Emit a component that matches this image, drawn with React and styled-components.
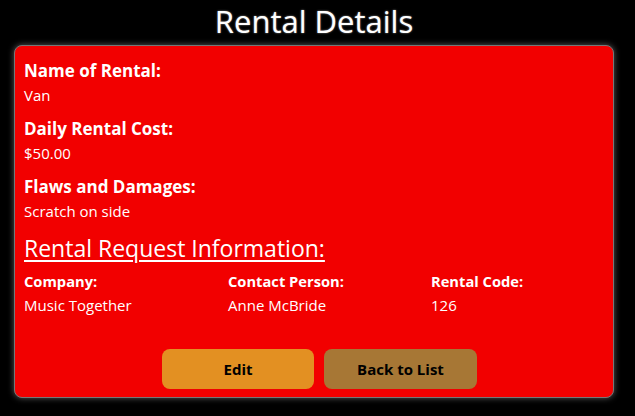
import React from "react";
import styled, { createGlobalStyle } from "styled-components";

const Global = createGlobalStyle`
  html, body { margin: 0; padding: 0; background: #000; }
  body { font-family: "Open Sans", "Noto Sans", sans-serif; color: #fff; }
`;

const Page = styled.div`
  width: 628px;
  height: 416px;
  background: #000;
  display: flex;
  flex-direction: column;
  align-items: center;
  box-sizing: border-box;
`;

const Title = styled.h1`
  margin: 0;
  font-size: 31px;
  font-weight: 500;
  line-height: 42px;
  color: #fff;
  text-shadow: 0 0 2px rgba(255,255,255,0.6);
`;

const Card = styled.div`
  margin-top: 3px;
  width: 600px;
  box-sizing: border-box;
  background: #f20000;
  border: 1px solid #777;
  border-radius: 8px;
  box-shadow: 0 0 6px rgba(200,200,200,0.45);
  padding: 13px 10px 8px 9px;
  display: flex;
  flex-direction: column;
`;

const Field = styled.div`
  display: flex;
  flex-direction: column;
  margin-bottom: 10px;
`;

const Label = styled.div`
  font-size: 17px;
  font-weight: 700;
  line-height: 24px;
`;

const Value = styled.div`
  font-size: 15px;
  line-height: 24px;
`;

const SectionHeading = styled.h2`
  margin: 0 0 7px 0;
  font-size: 23px;
  font-weight: 500;
  text-decoration: underline;
  text-decoration-thickness: 2px;
  text-underline-offset: 3px;
  line-height: 30px;
`;

const Grid = styled.div`
  display: grid;
  grid-template-columns: 204px 203px 1fr;
`;

const SmallLabel = styled.div`
  font-size: 14.7px;
  font-weight: 700;
  line-height: 22px;
`;

const SmallValue = styled.div`
  font-size: 15px;
  line-height: 26px;
`;

const Actions = styled.div`
  display: flex;
  justify-content: center;
  gap: 10px;
  margin-top: 31px;
  padding-left: 12px;
`;

const Button = styled.button`
  width: ${(p) => p.$w}px;
  height: 40px;
  border: none;
  border-radius: 8px;
  background: ${(p) => p.$bg};
  color: #000;
  font-family: "Open Sans", "Noto Sans", sans-serif;
  font-weight: 700;
  font-size: 15px;
  cursor: pointer;
`;

export default function App() {
  return (
    <Page>
      <Global />
      <Title>Rental Details</Title>
      <Card>
        <Field>
          <Label>Name of Rental:</Label>
          <Value>Van</Value>
        </Field>
        <Field>
          <Label>Daily Rental Cost:</Label>
          <Value>$50.00</Value>
        </Field>
        <Field>
          <Label>Flaws and Damages:</Label>
          <Value>Scratch on side</Value>
        </Field>
        <SectionHeading>Rental Request Information:</SectionHeading>
        <Grid>
          <div>
            <SmallLabel>Company:</SmallLabel>
            <SmallValue>Music Together</SmallValue>
          </div>
          <div>
            <SmallLabel>Contact Person:</SmallLabel>
            <SmallValue>Anne McBride</SmallValue>
          </div>
          <div>
            <SmallLabel>Rental Code:</SmallLabel>
            <SmallValue>126</SmallValue>
          </div>
        </Grid>
        <Actions>
          <Button $w={152} $bg="#e39022">Edit</Button>
          <Button $w={153} $bg="#a77735">Back to List</Button>
        </Actions>
      </Card>
    </Page>
  );
}
